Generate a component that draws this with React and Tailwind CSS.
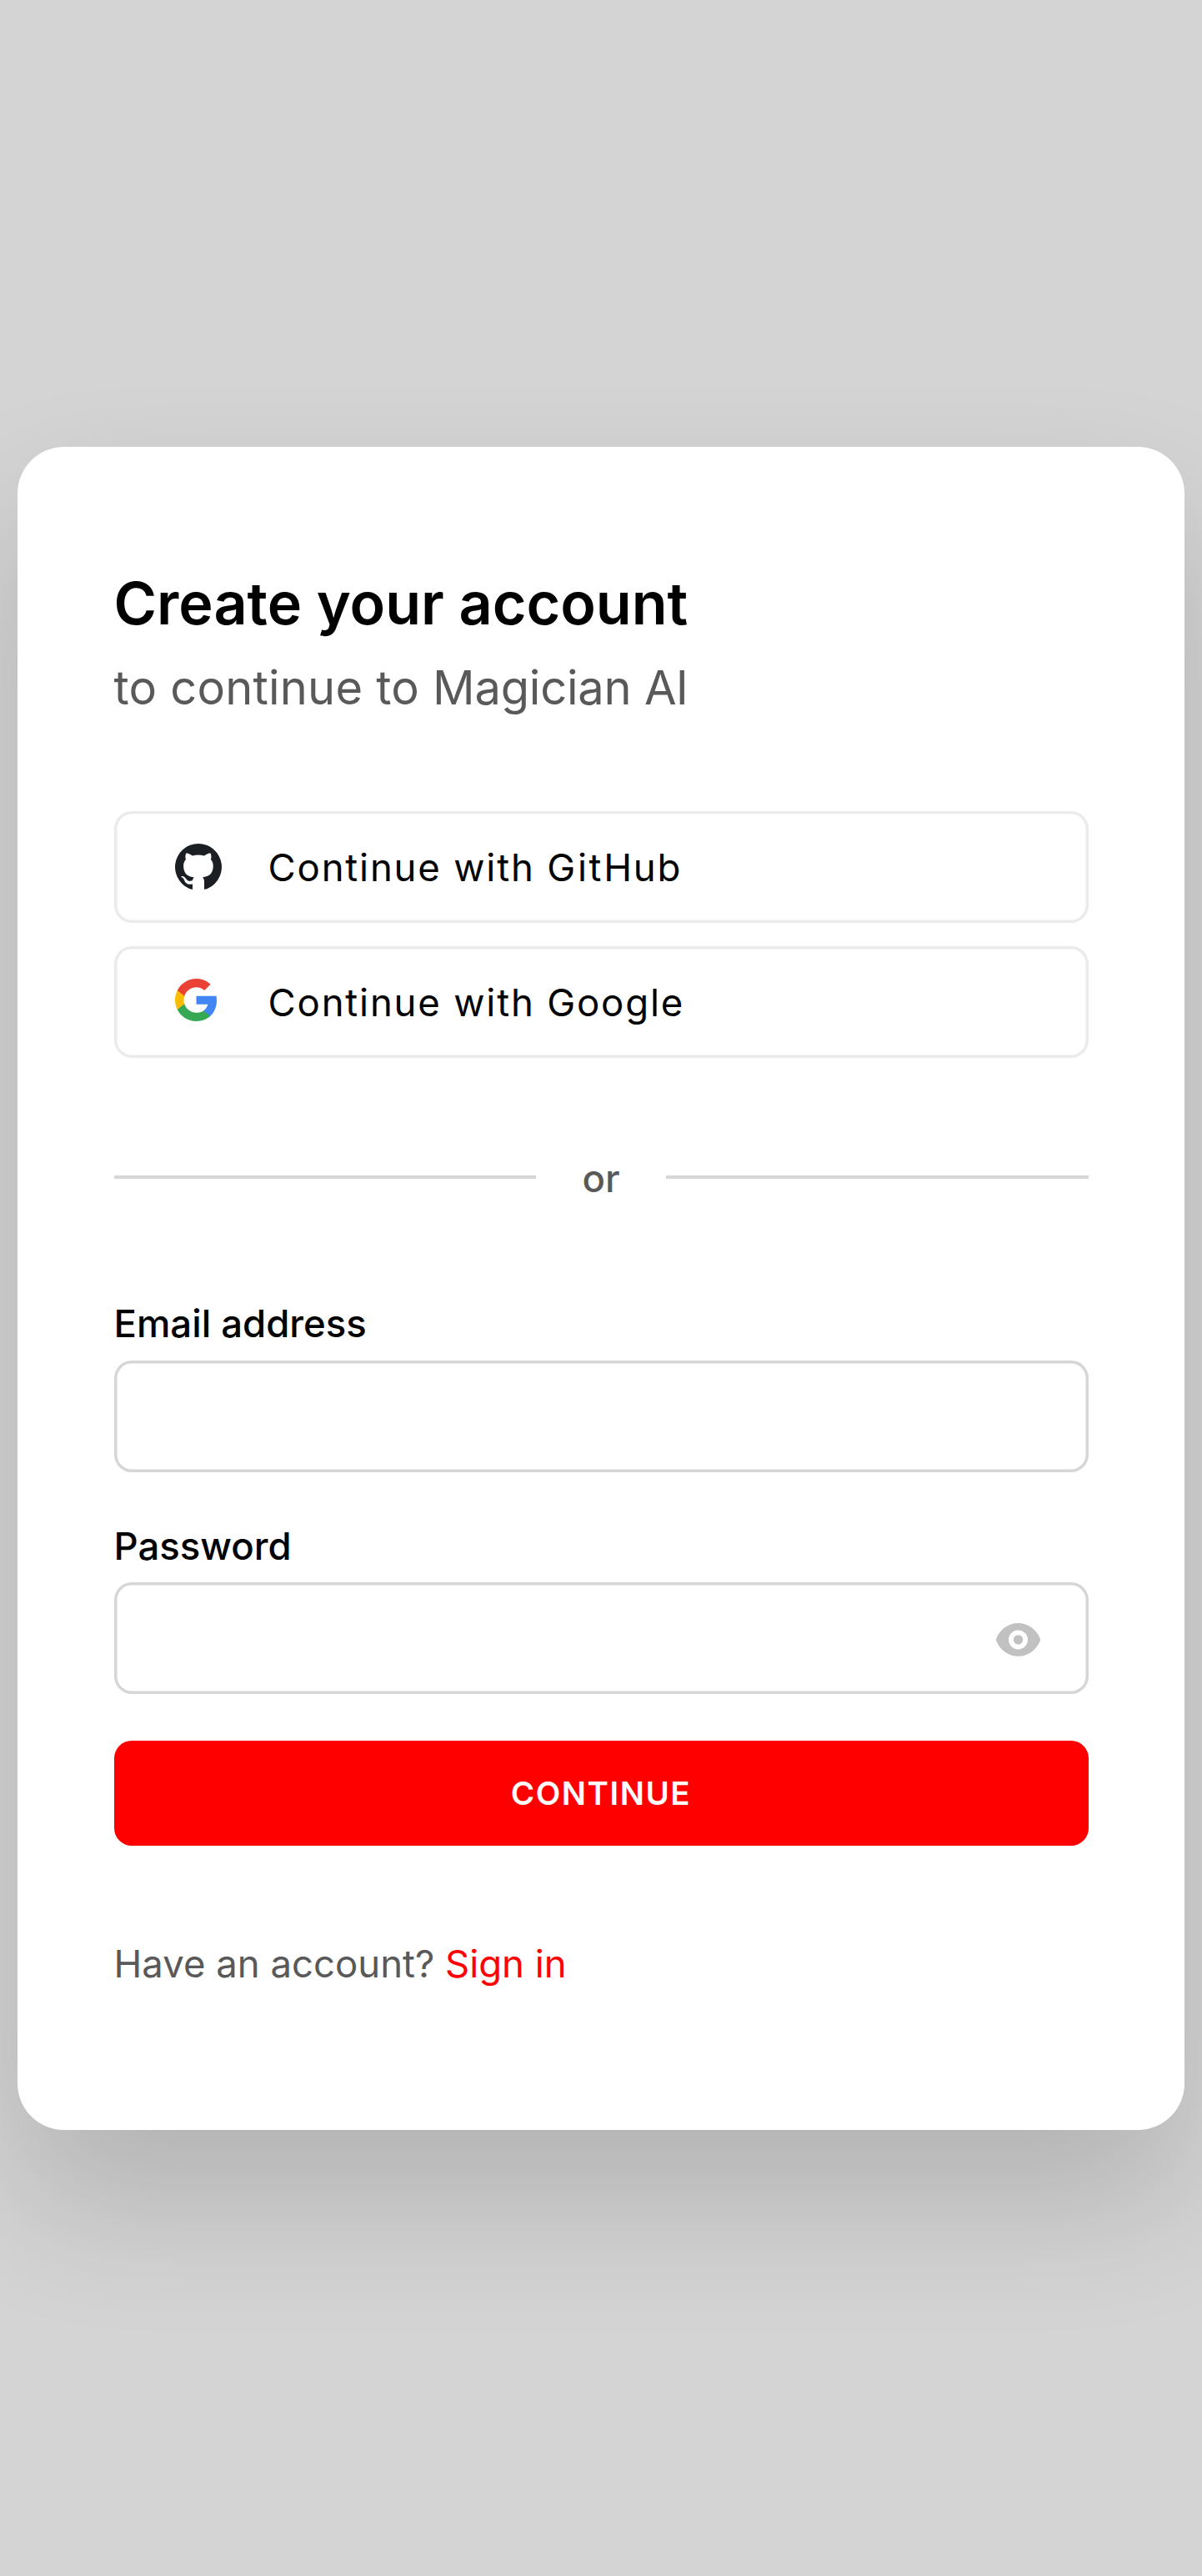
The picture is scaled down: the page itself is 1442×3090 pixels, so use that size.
function GitHubIcon() {
  return (
    <svg viewBox="0 0 32 32" className="size-14 shrink-0" fill="#1b1f23" aria-hidden="true">
      <path d="M16 0A16 16 0 0 0 12 31.49V27.69c-4.453.964-5.391-2.151-5.391-2.151-.729-1.844-1.781-2.339-1.781-2.339-1.448-.989.115-.968.115-.968 1.604.109 2.448 1.645 2.448 1.645 1.427 2.448 3.744 1.74 4.661 1.328.14-1.031.557-1.74 1.011-2.135-3.552-.401-7.287-1.776-7.287-7.907 0-1.751.62-3.177 1.645-4.297-.177-.401-.719-2.031.141-4.235 0 0 1.339-.427 4.4 1.641a15.436 15.436 0 0 1 4-.541c1.36.009 2.719.187 4 .541 3.043-2.068 4.381-1.641 4.381-1.641.875 2.204.317 3.834.161 4.235 1.027 1.12 1.635 2.547 1.635 4.297 0 6.145-3.74 7.5-7.296 7.891.556.479 1.15 1.464 1.15 2.959V31.49A16 16 0 0 0 16 0Z" />
    </svg>
  );
}

function GoogleIcon() {
  return (
    <span className="flex size-14 shrink-0 items-start">
      <svg viewBox="1 1 21.56 22" className="h-[51px] w-[50px]" aria-hidden="true">
        <path fill="#4285F4" d="M22.56 12.25c0-.78-.07-1.53-.2-2.25H12v4.26h5.92c-.26 1.37-1.04 2.53-2.21 3.31v2.77h3.57c2.08-1.92 3.28-4.74 3.28-8.09z" />
        <path fill="#34A853" d="M12 23c2.97 0 5.46-.98 7.28-2.66l-3.57-2.77c-.98.66-2.23 1.06-3.71 1.06-2.86 0-5.29-1.93-6.16-4.53H2.18v2.84C3.99 20.53 7.7 23 12 23z" />
        <path fill="#FBBC05" d="M5.84 14.09c-.22-.66-.35-1.36-.35-2.09s.13-1.43.35-2.09V7.07H2.18C1.43 8.55 1 10.22 1 12s.43 3.45 1.18 4.93l2.85-2.22.81-.62z" />
        <path fill="#EA4335" d="M12 5.38c1.62 0 3.06.56 4.21 1.64l3.15-3.15C17.45 2.09 14.97 1 12 1 7.7 1 3.99 3.47 2.18 7.07l3.66 2.84c.87-2.6 3.3-4.53 6.16-4.53z" />
      </svg>
    </span>
  );
}

function EyeIcon() {
  return (
    <svg viewBox="0 0 53 40" className="h-10 w-[53px]" fill="#c1c1c1" aria-hidden="true">
      <path
        fillRule="evenodd"
        d="M.2 18.6C4.6 7.4 15 .1 26.5.1S48.4 7.4 52.8 18.6q.4 1.3 0 2.6C48.4 32.4 38 39.7 26.5 39.7S4.6 32.4.2 21.2q-.4-1.3 0-2.6ZM26.5 8.4a11.5 11.5 0 1 0 0 23 11.5 11.5 0 0 0 0-23Z"
      />
      <circle cx="26.5" cy="19.9" r="5.7" />
    </svg>
  );
}

function SocialButton({ icon, children }) {
  return (
    <button
      type="button"
      className="flex h-[134px] w-full items-center gap-14 rounded-[21px] pl-[73px] text-[45.5px] leading-14 tracking-[0.04em] text-black shadow-[inset_0_0_0_3.5px_#ebebeb]"
    >
      {icon}
      <span className="pt-0.5">{children}</span>
    </button>
  );
}

function Field({ id, label, type, gap = 'gap-4', children }) {
  return (
    <div className={`flex flex-col ${gap}`}>
      <label htmlFor={id} className="text-[45.5px] leading-14 font-medium text-black">
        {label}
      </label>
      <div className="flex h-[134px] items-center rounded-[21px] pr-[58px] pl-14 shadow-[inset_0_0_0_3.5px_#d6d6d6]">
        <input id={id} type={type} className="h-full min-w-0 flex-1 bg-transparent text-[45.5px] outline-none" />
        {children}
      </div>
    </div>
  );
}

export default function App() {
  return (
    <main className="flex h-[3090px] w-[1442px] items-center justify-center overflow-hidden bg-[#d4d4d4] font-[Inter,sans-serif]">
      <section className="flex h-[2019px] w-[1400px] flex-col rounded-[56px] bg-white px-[115.5px] pt-[146px] shadow-[0_84px_168px_rgba(0,0,0,0.16)]">
        <header>
          <h1 className="text-[70px] leading-[84px] font-semibold text-black">Create your account</h1>
          <p className="mt-[22px] text-[56px] leading-[74px] text-[#595959]">
            <span className="tracking-[0.21px]">to continue to </span>
            <span className="tracking-[-0.2px]">Magician </span>
            <span className="tracking-[-0.8px]">AI</span>
          </p>
        </header>

        <div className="mt-[111px] flex flex-col gap-7">
          <SocialButton icon={<GitHubIcon />}>
            Continue with <span className="tracking-[2.7px]">Git</span>Hub
          </SocialButton>
          <SocialButton icon={<GoogleIcon />}>Continue with Google</SocialButton>
        </div>

        <div className="mt-[115px] flex items-center">
          <span className="mb-0.5 h-1 flex-1 bg-[#d6d6d6]" />
          <span className="w-[156px] pt-0.5 text-center text-[45.5px] leading-14 font-medium text-[#595959]">or</span>
          <span className="mb-0.5 h-1 flex-1 bg-[#d6d6d6]" />
        </div>

        <form className="mt-[118px] flex flex-col">
          <div className="flex flex-col gap-[61px]">
            <Field id="email" label="Email address" type="email" />
            <Field id="password" label="Password" type="password" gap="gap-[15px]">
              <button type="button" aria-label="Show password" className="mt-1">
                <EyeIcon />
              </button>
            </Field>
          </div>
          <button
            type="button"
            className="mt-14 h-[126px] rounded-[21px] bg-[#ff0000] text-[38.5px] leading-14 font-semibold tracking-[0.04em] text-white uppercase"
          >
            Continue
          </button>
        </form>

        <p className="mt-[114px] text-[45.5px] leading-14 text-[#595959]">
          Have an account?{' '}
          <a href="#" className="text-[#ff0000]">
            Sign in
          </a>
        </p>
      </section>
    </main>
  );
}
